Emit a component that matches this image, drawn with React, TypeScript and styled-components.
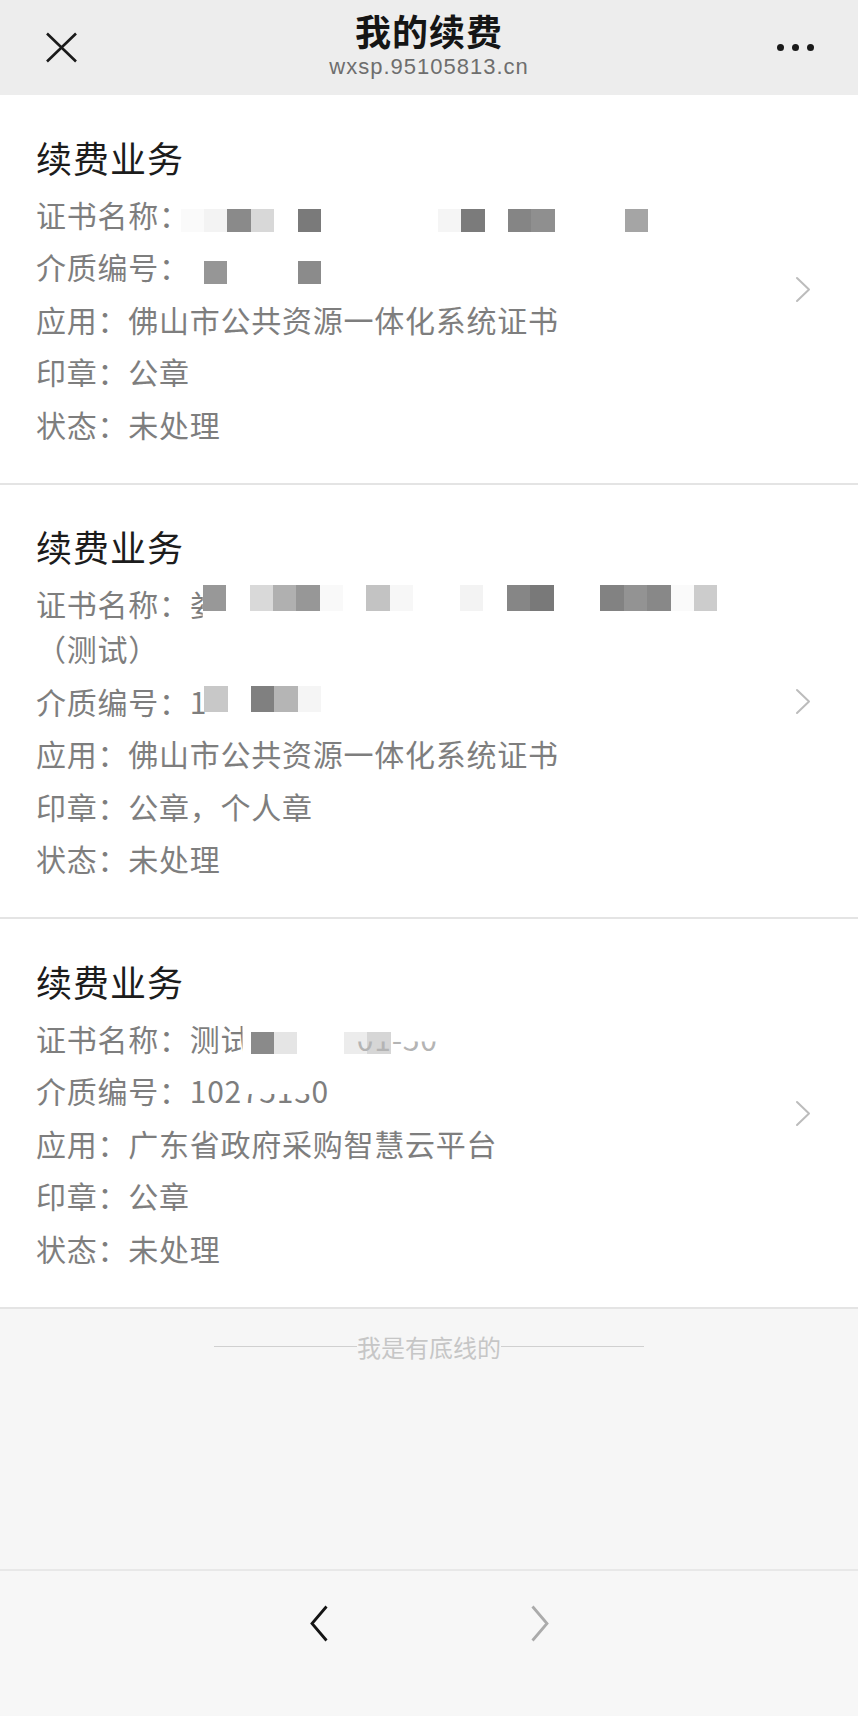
import { ReactNode } from "react";
import styled, { createGlobalStyle } from "styled-components";

const GlobalStyle = createGlobalStyle`
  html, body {
    margin: 0;
    padding: 0;
  }
  body {
    background: #f6f6f6;
    font-family: "Noto Sans CJK SC", "Liberation Sans", sans-serif;
  }
`;

const CELL = 23.4;

const Mosaic = ({
  cells,
  h,
  v,
  shift = 0,
}: {
  cells: string[];
  h: number;
  v: number;
  shift?: number;
}) => (
  <MosaicStrip $h={h} $v={v} $shift={shift}>
    {cells.map((c, i) => (
      <Cell key={i} $c={c} />
    ))}
  </MosaicStrip>
);

const Row = ({ label, children }: { label: string; children: ReactNode }) => (
  <RowText>
    {label}：{children}
  </RowText>
);

const Chevron = () => (
  <svg width="16" height="27" viewBox="0 0 16 27" fill="none">
    <path d="M2 2L14 13.5L2 25" stroke="#bcbcbc" strokeWidth="2" strokeLinecap="round" strokeLinejoin="round" />
  </svg>
);

const Card = ({ children }: { children: ReactNode }) => (
  <CardBox>
    <CardBody>
      <CardTitle>续费业务</CardTitle>
      <Rows>{children}</Rows>
    </CardBody>
    <Chevron />
  </CardBox>
);

const App = () => (
  <Page>
    <GlobalStyle />
    <Header>
      <HeaderSide>
        <svg width="33" height="31" viewBox="0 0 33 31" fill="none">
          <path d="M2 1.5L31 29.5M31 1.5L2 29.5" stroke="#1a1a1a" strokeWidth="2.6" />
        </svg>
      </HeaderSide>
      <HeaderCenter>
        <PageTitle>我的续费</PageTitle>
        <Domain>wxsp.95105813.cn</Domain>
      </HeaderCenter>
      <HeaderSide $right>
        <Dots>
          <Dot />
          <Dot />
          <Dot />
        </Dots>
      </HeaderSide>
    </Header>

    <Card>
      <Row label="证书名称">
        <Mosaic
          h={23}
          v={-5.9}
          shift={-9.2}
          cells={[
            "#fafafa", "#f3f3f3", "#8a8a8a", "#d8d8d8", "", "#7a7a7a", "", "", "", "", "",
            "#f5f5f5", "#7b7b7b", "", "#858585", "#8f8f8f", "", "", "", "#a5a5a5",
          ]}
        />
      </Row>
      <Row label="介质编号">
        <Mosaic h={23} v={-5.4} shift={-9.2} cells={["", "#969696", "", "", "", "#8b8b8b"]} />
      </Row>
      <Row label="应用">佛山市公共资源一体化系统证书</Row>
      <Row label="印章">公章</Row>
      <Row label="状态">未处理</Row>
    </Card>

    <Card>
      <Row label="证书名称">
        <Clipped $w={13}>娄</Clipped>
        <Mosaic
          h={26}
          v={4.6}
          cells={[
            "#989898", "", "#d9d9d9", "#b0b0b0", "#979797", "#f9f9f9", "", "#c3c3c3", "#f7f7f7", "", "",
            "#f3f3f3", "", "#868686", "#797979", "", "", "#828282", "#939393", "#888888", "#fafafa", "#cccccc",
          ]}
        />
        <br />
        （测试）
      </Row>
      <Row label="介质编号">
        1
        <Mosaic h={26} v={1.1} shift={-3} cells={["#c8c8c8", "", "#808080", "#b5b5b5", "#f5f5f5"]} />
      </Row>
      <Row label="应用">佛山市公共资源一体化系统证书</Row>
      <Row label="印章">公章，个人章</Row>
      <Row label="状态">未处理</Row>
    </Card>

    <Card>
      <Row label="证书名称">
        测<Clipped $w={22}>试</Clipped>
        <Mosaic h={22} v={-3.9} shift={8} cells={["#8a8a8a", "#e5e5e5", "", "", "#ececec", "#d6d6d6"]} />
        <TopCut $cut={58} $soft>
          01-50
        </TopCut>
      </Row>
      <Row label="介质编号">
        102<TopCut $cut={58}>7513</TopCut>0
      </Row>
      <Row label="应用">广东省政府采购智慧云平台</Row>
      <Row label="印章">公章</Row>
      <Row label="状态">未处理</Row>
    </Card>

    <Footer>
      <EndNote>我是有底线的</EndNote>
      <Toolbar>
        <svg width="18" height="37" viewBox="0 0 18 37" fill="none">
          <path d="M16.5 1.5L2 18.5L16.5 35.5" stroke="#141414" strokeWidth="2.8" />
        </svg>
        <svg width="18" height="37" viewBox="0 0 18 37" fill="none">
          <path d="M1.5 1.5L16 18.5L1.5 35.5" stroke="#ababab" strokeWidth="2.8" />
        </svg>
      </Toolbar>
    </Footer>
  </Page>
);

export default App;

const Page = styled.div`
  min-height: 1716px;
  display: flex;
  flex-direction: column;
`;

const Header = styled.header`
  display: grid;
  grid-template-columns: 1fr auto 1fr;
  align-items: center;
  height: 95px;
  background: #ededed;
`;

const HeaderSide = styled.div<{ $right?: boolean }>`
  display: flex;
  justify-content: ${(p) => (p.$right ? "flex-end" : "flex-start")};
  padding: ${(p) => (p.$right ? "0 44px 0 0" : "0 0 0 45px")};
`;

const HeaderCenter = styled.div`
  align-self: start;
  display: flex;
  flex-direction: column;
  align-items: center;
  padding-top: 10px;
`;

const PageTitle = styled.div`
  font-size: 36px;
  line-height: 40px;
  font-weight: 700;
  color: #151515;
  letter-spacing: 1px;
  margin-bottom: 4px;
`;

const Domain = styled.div`
  font-family: "Liberation Sans", sans-serif;
  font-size: 22px;
  line-height: 26px;
  letter-spacing: 1px;
  color: #6e6e6e;
`;

const Dots = styled.div`
  display: flex;
  gap: 8px;
`;

const Dot = styled.span`
  width: 7px;
  height: 7px;
  border-radius: 50%;
  background: #1a1a1a;
`;

const CardBox = styled.section`
  display: flex;
  align-items: center;
  background: #fff;
  border-bottom: 2px solid #e4e4e4;
  padding: 37.5px 47px 36px 36px;
`;

const CardBody = styled.div`
  flex: 1;
  min-width: 0;
`;

const CardTitle = styled.div`
  font-size: 36px;
  line-height: 48px;
  color: #1c1c1c;
  letter-spacing: 1px;
  margin-bottom: 11px;
`;

const Rows = styled.div`
  display: flex;
  flex-direction: column;
  gap: 7.5px;
`;

const RowText = styled.div`
  font-size: 30px;
  line-height: 45px;
  letter-spacing: 0.75px;
  color: #7e7e7e;
  white-space: nowrap;
`;

const MosaicStrip = styled.span<{ $h: number; $v: number; $shift: number }>`
  display: inline-flex;
  height: ${(p) => p.$h}px;
  vertical-align: ${(p) => p.$v}px;
  margin-left: ${(p) => p.$shift}px;
`;

const Cell = styled.span<{ $c: string }>`
  flex: none;
  width: ${CELL}px;
  height: 100%;
  background: ${(p) => p.$c || "transparent"};
`;

const Clipped = styled.span<{ $w: number }>`
  display: inline-block;
  width: ${(p) => p.$w}px;
  white-space: nowrap;
  clip-path: inset(0);
`;

const TopCut = styled.span<{ $cut: number; $soft?: boolean }>`
  display: inline-block;
  clip-path: inset(${(p) => p.$cut}% 0 0 0);
  color: ${(p) => (p.$soft ? "#b4b4b4" : "inherit")};
  margin-left: ${(p) => (p.$soft ? "-34px" : "0")};
`;

const Footer = styled.div`
  flex: 1;
  display: flex;
  flex-direction: column;
`;

const EndNote = styled.div`
  display: flex;
  align-items: center;
  justify-content: center;
  margin-top: 26px;
  font-size: 24px;
  line-height: 24px;
  color: #c6c6c6;

  &::before,
  &::after {
    content: "";
    width: 143px;
    height: 1px;
    background: #d0d0d0;
  }
`;

const Toolbar = styled.div`
  margin-top: auto;
  height: 147px;
  box-sizing: border-box;
  padding-top: 34px;
  display: flex;
  justify-content: center;
  align-items: flex-start;
  gap: 203px;
  border-top: 2px solid #e8e8e8;
  background: #f7f7f7;
`;
